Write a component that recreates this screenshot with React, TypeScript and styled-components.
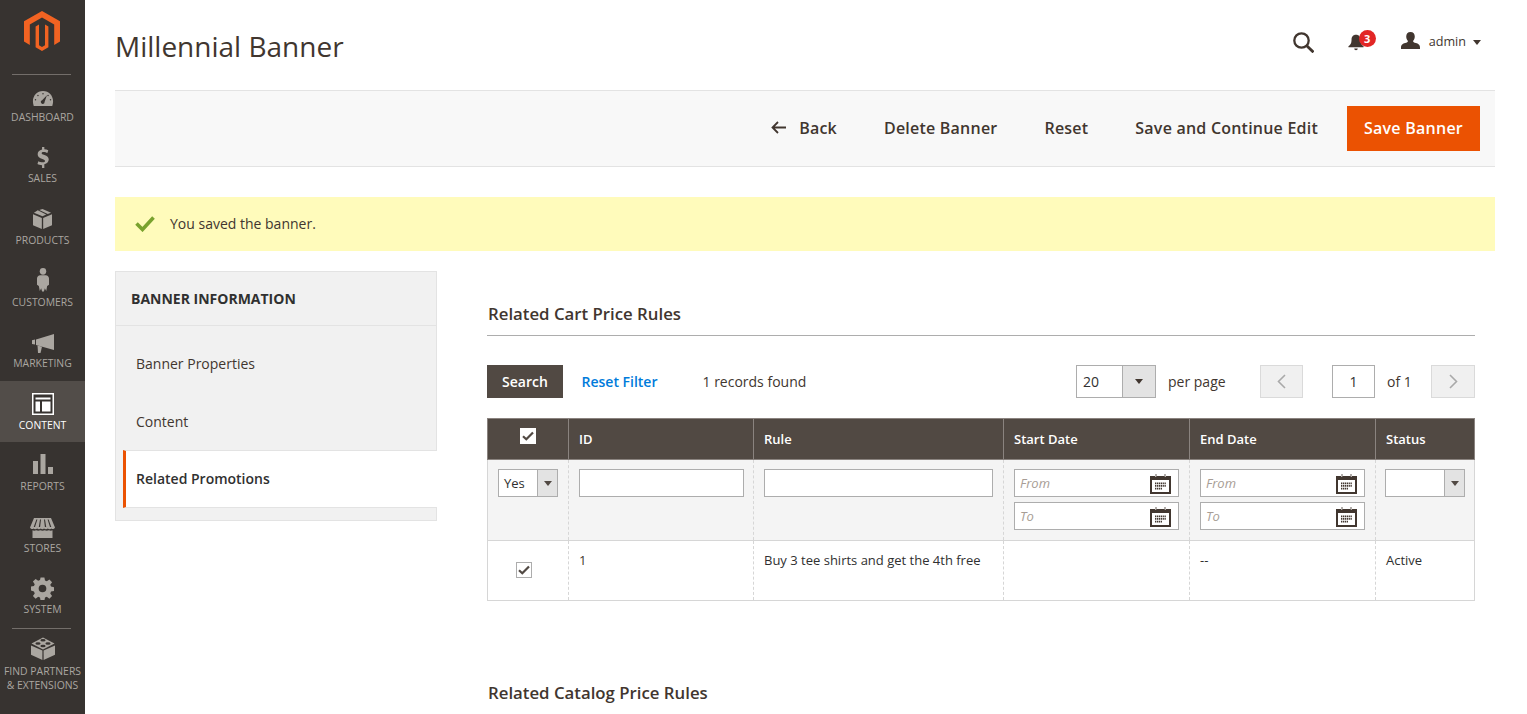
import React from 'react';
import styled, { createGlobalStyle } from 'styled-components';

const Global = createGlobalStyle`
  html, body { margin: 0; padding: 0; height: 100%; overflow: hidden; background: #fff; }
  body { font-family: "Open Sans", "Liberation Sans", sans-serif; color: #41362f; font-size: 14px; }
  * { box-sizing: border-box; }
`;

const Page = styled.div`
  display: flex;
  width: 1527px;
  height: 714px;
  overflow: hidden;
`;

const Sidebar = styled.aside`
  width: 85px;
  flex: none;
  height: 714px;
  background: #373330;
  overflow: hidden;
`;

const LogoBox = styled.div`
  height: 73px;
  display: flex;
  justify-content: center;
  padding-top: 11px;
  padding-right: 1px;
`;

const NavItem = styled.div<{ $active?: boolean; $rule?: boolean }>`
  position: relative;
  height: 61.55px;
  padding-top: 7px;
  display: flex;
  flex-direction: column;
  align-items: center;
  background: ${p => (p.$active ? '#524d49' : 'transparent')};
  color: ${p => (p.$active ? '#fff' : '#aaa6a0')};
  ${p => p.$rule && `
    &::before {
      content: '';
      position: absolute;
      left: 12px;
      right: 14px;
      top: 1px;
      height: 1px;
      background: #736e6a;
    }
  `}
`;

const NavIcon = styled.div<{ $dy?: number }>`
  height: 30px;
  display: flex;
  align-items: center;
  justify-content: center;
  flex: none;
  transform: translateY(${p => p.$dy || 0}px);
`;

const NavLabel = styled.div`
  font-size: 10.4px;
  line-height: 14px;
  margin-top: -.1px;
  text-transform: uppercase;
  text-align: center;
  white-space: nowrap;
`;

const Main = styled.main`
  flex: 1;
  min-width: 0;
  padding: 0 32px 0 30px;
`;

const Header = styled.header`
  height: 90px;
  display: flex;
  align-items: center;
  justify-content: space-between;
  padding-top: 2px;
`;

const Title = styled.h1`
  margin: 0;
  font-size: 28px;
  font-weight: 400;
  color: #41362f;
  line-height: 36px;
`;

const HeaderTools = styled.div`
  display: flex;
  align-items: center;
  padding-right: 14px;
  margin-bottom: 8px;
  height: 24px;
`;

const BellWrap = styled.div`
  position: relative;
  width: 16px;
  height: 17px;
  margin-left: 34px;
  margin-top: 1px;
`;

const BellSvg = styled.svg`
  display: block;
`;

const Badge = styled.span`
  position: absolute;
  left: 11px;
  top: -4px;
  width: 17px;
  height: 17px;
  border-radius: 50%;
  background: #e22626;
  color: #fff;
  font-size: 11px;
  font-weight: 700;
  line-height: 17px;
  text-align: center;
`;

const UserSvg = styled.svg`
  margin-left: 37px;
  margin-bottom: 3px;
`;

const UserName = styled.span`
  font-size: 12.6px;
  color: #41362f;
  margin-left: 9px;
  margin-bottom: 2px;
`;

const Caret = styled.span<{ $color?: string }>`
  display: inline-block;
  width: 0;
  height: 0;
  border-left: 4px solid transparent;
  border-right: 4px solid transparent;
  border-top: 5px solid ${p => p.$color || '#41362f'};
`;

const UserCaret = styled(Caret)`
  margin-left: 7px;
`;

const ActionBar = styled.div`
  height: 77px;
  background: #f8f8f8;
  border-top: 1px solid #e3e3e3;
  border-bottom: 1px solid #e3e3e3;
  display: flex;
  align-items: center;
  justify-content: flex-end;
  padding-right: 15px;
`;

const ActionLink = styled.div`
  font-size: 16px;
  font-weight: 600;
  letter-spacing: .22px;
  color: #41362f;
  margin-right: 47px;
  padding-bottom: 2px;
  display: flex;
  align-items: center;
  white-space: nowrap;
`;

const LastLink = styled(ActionLink)`
  margin-right: 29px;
`;

const BackArrow = styled.svg`
  margin-right: 13px;
`;

const Primary = styled.div`
  width: 133px;
  height: 45px;
  background: #eb5202;
  color: #fff;
  font-size: 16px;
  font-weight: 600;
  letter-spacing: .25px;
  padding-bottom: 2px;
  display: flex;
  align-items: center;
  justify-content: center;
`;

const Message = styled.div`
  margin-top: 30px;
  height: 54px;
  background: #fffbbb;
  display: flex;
  align-items: center;
  padding-left: 20px;
  padding-bottom: 1px;
  font-size: 14px;
  color: #41362f;
`;

const CheckMark = styled.svg`
  margin-right: 15px;
`;

const Columns = styled.div`
  display: flex;
  margin-top: 20px;
`;

const Tabs = styled.nav`
  width: 322px;
  height: 250px;
  flex: none;
  background: #f1f1f1;
  border: 1px solid #e3e3e3;
`;

const TabsTitle = styled.div`
  height: 54px;
  border-bottom: 1px solid #e3e3e3;
  padding-left: 15px;
  display: flex;
  align-items: center;
  font-size: 14px;
  font-weight: 700;
  color: #303030;
  text-transform: uppercase;
`;

const TabList = styled.div`
  padding-top: 9px;
`;

const TabItem = styled.div`
  height: 57.5px;
  padding-left: 20px;
  display: flex;
  align-items: center;
  font-size: 14px;
  color: #41362f;
`;

const ActiveTab = styled.div`
  height: 58px;
  margin-left: 7px;
  margin-right: -1px;
  background: #fff;
  border-left: 3px solid #eb5202;
  border-top: 1px solid #e3e3e3;
  border-bottom: 1px solid #e3e3e3;
  padding-left: 10px;
  padding-bottom: 2px;
  display: flex;
  align-items: center;
  font-size: 14px;
  font-weight: 600;
  color: #303030;
`;

const Content = styled.section`
  flex: 1;
  min-width: 0;
  margin-left: 50px;
  margin-right: 20px;
  padding-top: 28px;
`;

const SectionTitle = styled.h2`
  margin: 0;
  height: 37px;
  padding-left: 1px;
  border-bottom: 1px solid #adadad;
  font-size: 16.8px;
  font-weight: 600;
  line-height: 30px;
  color: #41362f;
`;

const GridBar = styled.div`
  margin-top: 29px;
  height: 33px;
  display: flex;
  align-items: center;
`;

const SearchButton = styled.div`
  width: 76px;
  height: 33px;
  background: #514943;
  color: #fff;
  font-size: 14px;
  font-weight: 600;
  display: flex;
  align-items: center;
  justify-content: center;
`;

const ResetFilter = styled.span`
  margin-left: 18.5px;
  font-size: 14px;
  font-weight: 600;
  color: #007bdb;
`;

const Records = styled.span`
  margin-left: 45px;
  font-size: 14px;
  color: #41362f;
`;

const Pager = styled.div`
  margin-left: auto;
  display: flex;
  align-items: center;
`;

const SelectBox = styled.div<{ $w: number; $h: number; $arrow: number; $fs: number; $shift?: number }>`
  width: ${p => p.$w}px;
  height: ${p => p.$h}px;
  margin-left: ${p => p.$shift || 0}px;
  border: 1px solid #adadad;
  background: #fff;
  display: flex;
  font-size: ${p => p.$fs}px;
  color: #303030;
  flex: none;
  & > span:first-child {
    flex: 1;
    display: flex;
    align-items: center;
    padding-left: ${p => (p.$fs < 14 ? 5 : 6)}px;
  }
  & > span:last-child {
    width: ${p => p.$arrow}px;
    background: #e3e3e3;
    border-left: 1px solid #adadad;
    display: flex;
    align-items: center;
    justify-content: center;
  }
`;

const PerPage = styled.span`
  margin-left: 12px;
  font-size: 14px;
  width: 92px;
`;

const PageBtn = styled.div<{ $w: number }>`
  width: ${p => p.$w}px;
  height: 33px;
  background: #f0f0f0;
  border: 1px solid #dadada;
  display: flex;
  align-items: center;
  justify-content: center;
  flex: none;
`;

const PageInput = styled.div`
  margin-left: 29px;
  width: 43px;
  height: 33px;
  border: 1px solid #adadad;
  display: flex;
  align-items: center;
  justify-content: center;
  font-size: 14px;
  color: #303030;
`;

const OfPages = styled.span`
  margin-left: 12px;
  width: 44px;
  font-size: 14px;
`;

const Table = styled.table`
  margin-top: 20px;
  width: 987px;
  table-layout: fixed;
  border-collapse: collapse;
  border-spacing: 0;
  font-size: 13px;
`;

const Th = styled.th`
  height: 41px;
  background: #514943;
  color: #fff;
  border: 1px solid #8a837f;
  font-size: 13px;
  font-weight: 600;
  text-align: left;
  padding: 0 10px;
  vertical-align: middle;
`;

const CheckTh = styled(Th)`
  padding: 0 0 4px 0;
  text-align: center;
`;

const FilterTd = styled.td`
  height: 81px;
  background: #f4f4f4;
  border-left: 1px dashed #d6d6d6;
  border-right: 1px dashed #d6d6d6;
  border-bottom: 1px solid #d6d6d6;
  padding: 9px 10px 0;
  vertical-align: top;
  &:first-child { border-left: 1px solid #d6d6d6; }
  &:last-child { border-right: 1px solid #d6d6d6; }
`;

const Td = styled.td`
  height: 60px;
  border-left: 1px dashed #d6d6d6;
  border-right: 1px dashed #d6d6d6;
  border-bottom: 1px solid #d6d6d6;
  padding: 10px 10px 0;
  vertical-align: top;
  color: #303030;
  font-size: 13px;
  line-height: 18px;
  &:first-child { border-left: 1px solid #d6d6d6; }
  &:last-child { border-right: 1px solid #d6d6d6; }
`;

const IdLink = styled.span`
  color: #41362f;
`;

const CheckTd = styled(Td)`
  padding: 21px 8px 0 0;
  text-align: center;
`;

const Box = styled.span<{ $border?: boolean }>`
  display: inline-flex;
  width: 16px;
  height: 16px;
  background: #fff;
  border: 1px solid ${p => (p.$border ? '#adadad' : '#fff')};
  align-items: center;
  justify-content: center;
  vertical-align: top;
`;

const TextInput = styled.div<{ $extra?: number }>`
  height: 28px;
  width: calc(100% + ${p => p.$extra || 0}px);
  background: #fff;
  border: 1px solid #adadad;
`;

const DateInput = styled.div`
  height: 28px;
  width: 100%;
  background: #fff;
  border: 1px solid #adadad;
  display: flex;
  align-items: center;
  justify-content: space-between;
  padding: 0 7px 0 5px;
  font-size: 13px;
  font-style: italic;
  color: #a79d95;
  & + & { margin-top: 5px; }
`;

const NextTitle = styled(SectionTitle)`
  margin-top: 77px;
  border: none;
`;

const Logo = () => (
  <svg width="36" height="40" viewBox="0 0 36 40">
    <path fill="#f26322" d="M18 0 36 10.300V30.600L30.200 34V13.600L18 6.600 5.800 13.600V34L0 30.600V10.300Z" />
    <path fill="#f26322" d="M11.600 15.600 15 13.600V34.300L18 36 21 34.300V13.600L24.400 15.600V36.300L18 40 11.600 36.300Z" />
  </svg>
);

const IconDashboard = () => (
  <svg width="22" height="17" viewBox="0 0 24 18" preserveAspectRatio="none" fill="currentColor">
    <path fillRule="evenodd" d="M12 1C5.500 1 1 6 1 12c0 1.700.3 3.300.9 5h20.200c.6-1.700.9-3.300.9-5C23 6 18.500 1 12 1ZM12 3.200a.8.8 0 1 1 0 1.600.8.800 0 0 1 0-1.600ZM6.500 5a.8.8 0 1 1 0 1.600.8.800 0 0 1 0-1.600ZM17.500 5a.8.8 0 1 1 0 1.600.8.800 0 0 1 0-1.600ZM3.800 9.500a.8.8 0 1 1 0 1.600.8.800 0 0 1 0-1.600ZM20.200 9.500a.8.8 0 1 1 0 1.600.8.800 0 0 1 0-1.600Z" />
    <path fill="#373330" d="M16.300 5.500 13.700 12.600a2 2 0 0 1-3.500 1.500 2.100 2.100 0 0 1 .8-3.200Z" />
  </svg>
);

const IconDollar = () => (
  <svg width="14" height="21" viewBox="0 0 14 22" fill="currentColor">
    <path d="M6 0h2.400v2.300c1.600.1 3 .5 4.100 1.100l-.9 3c-1.100-.6-2.500-1.100-4-1.100-1.300 0-2 .5-2 1.200 0 .8.800 1.200 2.900 1.900 2.900 1 4.500 2.300 4.500 4.800 0 2.400-1.700 4.300-4.600 4.800V22H6v-2.800c-1.900-.1-3.600-.6-4.800-1.300l.9-3.100c1.200.7 3 1.300 4.700 1.300 1.400 0 2.300-.6 2.300-1.500 0-.9-.8-1.400-2.800-2.100C3.400 11.600 1.400 10.300 1.400 7.600c0-2.400 1.700-4.300 4.600-4.900Z" />
  </svg>
);

const IconBox = () => (
  <svg width="19" height="20" viewBox="0 0 20 21" fill="currentColor">
    <path d="M0 5.500 9.300 9.400V21L0 17Z" />
    <path d="M20 5.500 10.700 9.400V21L20 17Z" />
    <path d="M6.600 .9 10 0 19 3.800 15.500 5.200ZM5 1.400 13.900 5.800 10 7.700 1 3.800Z" />
  </svg>
);

const IconPerson = () => (
  <svg width="12" height="24" viewBox="0 0 13 25" preserveAspectRatio="none" fill="currentColor">
    <circle cx="6.500" cy="3.500" r="3.500" />
    <path d="M3.500 7.500h6c1.900 0 3.500 1.400 3.500 3.500v6.500l-2 1.200-1 5.300-1.500-3-1 3.500h-2l-1-3.500-1.500 3-1-5.300L0 17.500V11c0-2.100 1.600-3.500 3.500-3.500Z" />
  </svg>
);

const IconMegaphone = () => (
  <svg width="22" height="19" viewBox="0 0 22 19" fill="currentColor">
    <path d="M0 6.200 3 5.600V10.400L0 10Z" />
    <path d="M4 5.400 22 0V16L4 11Z" />
    <path d="M5.500 11.500 10 12.800 8.500 19H6Z" />
  </svg>
);

const IconContent = () => (
  <svg width="22" height="22" viewBox="0 0 22 22">
    <path fill="#fff" d="M0 0h22v22H0Z" />
    <path fill="#373330" d="M1.500 1.500h19v19h-19ZM3.500 4.500v2h15v-2ZM3.500 8.500v10h4.500v-10ZM10 8.500v10h8.500v-10Z" fillRule="evenodd" />
  </svg>
);

const IconBars = () => (
  <svg width="20" height="20" viewBox="0 0 20 20" fill="currentColor">
    <path d="M0 7h5v13H0ZM7.500 0h5v20h-5ZM15 13h5v7h-5Z" />
  </svg>
);

const IconStore = () => (
  <svg width="25" height="20" viewBox="0 0 25 20" fill="currentColor">
    <path fillRule="evenodd" d="M4 0H21L25 9.500C24.500 11 22.500 11.500 21.500 10.500 20.800 11.500 18.800 11.600 17.800 10.500 17 11.500 15 11.600 14 10.500 13.300 11.500 11.500 11.500 10.800 10.500 10 11.500 8 11.500 7.200 10.500 6 11.500 4.500 11.500 3.500 10.500 2.500 11.500.5 11 0 9.500ZM6.400 1.500 3.700 9h1.300l2.400-7.500ZM10 1.500 8.800 9h1.300l.9-7.500ZM14 1.500 14.900 9h1.300l-1.200-7.500ZM17.600 1.500 20 9h1.300l-2.700-7.500Z" />
    <path d="M2.500 12.300c1.200.5 2.500.4 3.700-.1 1.200.6 2.800.6 4.100 0 1.400.6 3 .6 4.400 0 1.300.6 2.900.6 4.100 0 1.200.5 2.500.6 3.700.1V20h-20Z" />
  </svg>
);

const IconGear = () => (
  <svg width="23" height="23" viewBox="-.5 0 24 23" fill="currentColor">
    <path fillRule="evenodd" d="M9.500 0h4l.6 3.200 1.900.8 2.700-1.900 2.800 2.800-1.900 2.700.8 1.900 3.100.6v4l-3.100.6-.8 1.900 1.900 2.700-2.800 2.800-2.700-1.900-1.900.8-.6 3.200h-4l-.6-3.200-1.900-.8-2.700 1.900-2.800-2.800 1.900-2.700-.8-1.900L-.5 13.500v-4l3.100-.6.8-1.900-1.900-2.700 2.800-2.800 2.700 1.900 1.900-.8ZM11.500 7.500a4 4 0 1 0 0 8 4 4 0 0 0 0-8Z" />
  </svg>
);

const IconLego = () => (
  <svg width="24" height="23" viewBox="0 0 24 23" fill="currentColor">
    <path d="M0 8.500 11.400 13.500V23L0 17.800Z" />
    <path d="M24 8.500 12.600 13.500V23L24 17.800Z" />
    <path d="M12 0.500 23.500 6.500 12 12.500.5 6.500ZM12 1.900a2.600 1.300 0 1 0 0 2.600 2.600 1.300 0 0 0 0-2.600Z" fillRule="evenodd" />
    <ellipse cx="7" cy="6.500" rx="2.600" ry="1.300" fill="#373330" />
    <ellipse cx="17" cy="6.500" rx="2.600" ry="1.300" fill="#373330" />
    <ellipse cx="12" cy="9" rx="2.600" ry="1.300" fill="#373330" />
  </svg>
);

const Search = () => (
  <svg width="21" height="21" viewBox="0 0 21 21" fill="none" stroke="#41362f">
    <circle cx="8.500" cy="8.500" r="7.200" strokeWidth="2.300" />
    <path d="M13.500 13.500 20.500 20.300" strokeWidth="2.800" />
  </svg>
);

const Bell = () => (
  <BellSvg width="16" height="17" viewBox="0 0 18 20" preserveAspectRatio="none" fill="#41362f">
    <path d="M9 1c3.500 0 5 2.700 5 6 0 4 1.500 6 3.500 7.500v1H.5v-1C2.500 13 4 11 4 7c0-3.300 1.500-6 5-6Z" />
    <path d="M7 17h4a2 2 0 0 1-4 0Z" />
  </BellSvg>
);

const User = () => (
  <UserSvg width="19" height="17" viewBox="0 0 20 19" preserveAspectRatio="none" fill="#41362f">
    <path d="M10 0c3 0 4.500 2.200 4.500 5 0 2-.7 3.700-1.800 5 .1 1.200 1 1.700 3 2.300 2.300.7 4.300 1.700 4.300 5.200V19H0v-1.500c0-3.500 2-4.500 4.300-5.200 2-.6 2.900-1.100 3-2.300C6.200 8.700 5.500 7 5.500 5 5.500 2.200 7 0 10 0Z" />
  </UserSvg>
);

const calendarDots = [0, 1, 2].flatMap(r =>
  [0, 1, 2, 3, 4, 5].filter(c => r < 2 || c < 4).map(c => `M${5 + c * 1.900} ${9.500 + r * 2.600}h1.300v1.700h-1.300Z`)
).join('');

const Calendar = () => (
  <svg width="21" height="21" viewBox="0 0 21 21">
    <path fill="#41362f" d="M0 3h5v-2h1.500v2h8v-2H16v2h5v18H0Z" />
    <path fill="#fff" d="M2 7h17v12H2Z" />
    <path fill="#fff" d="M5.400 1h.8v3h-.8ZM14.800 1h.8v3h-.8Z" />
    <path fill="#41362f" d={calendarDots} />
  </svg>
);

const Tick = () => (
  <svg width="12" height="10" viewBox="0 0 12 10">
    <path d="M1 5.200 4.300 8.300 11 1.500" fill="none" stroke="#514943" strokeWidth="2.200" />
  </svg>
);

const navItems: { label: React.ReactNode; icon: React.ReactNode; active?: boolean; rule?: boolean; dy?: number }[] = [
  { label: 'Dashboard', icon: <IconDashboard />, rule: true, dy: 3 },
  { label: 'Sales', icon: <IconDollar />, dy: 1 },
  { label: 'Products', icon: <IconBox />, dy: 1 },
  { label: 'Customers', icon: <IconPerson /> },
  { label: 'Marketing', icon: <IconMegaphone />, dy: 2 },
  { label: 'Content', icon: <IconContent />, active: true, dy: 1 },
  { label: 'Reports', icon: <IconBars /> },
  { label: 'Stores', icon: <IconStore />, dy: 2 },
  { label: 'System', icon: <IconGear />, dy: 1 },
  { label: <>Find Partners<br />&amp; Extensions</>, icon: <IconLego />, rule: true },
];

const colWidths = [81, 185, 250, 186, 186, 99];

export default function App() {
  return (
    <Page>
      <Global />
      <Sidebar>
        <LogoBox><Logo /></LogoBox>
        {navItems.map((n, i) => (
          <NavItem key={i} $active={n.active} $rule={n.rule}>
            <NavIcon $dy={n.dy}>{n.icon}</NavIcon>
            <NavLabel>{n.label}</NavLabel>
          </NavItem>
        ))}
      </Sidebar>
      <Main>
        <Header>
          <Title>Millennial Banner</Title>
          <HeaderTools>
            <Search />
            <BellWrap><Bell /><Badge>3</Badge></BellWrap>
            <User />
            <UserName>admin</UserName>
            <UserCaret />
          </HeaderTools>
        </Header>
        <ActionBar>
          <ActionLink>
            <BackArrow width="15" height="13" viewBox="0 0 15 13" fill="none" stroke="#41362f" strokeWidth="1.800">
              <path d="M15 6.500H2M7 1 1.500 6.500 7 12" />
            </BackArrow>
            Back
          </ActionLink>
          <ActionLink>Delete Banner</ActionLink>
          <ActionLink>Reset</ActionLink>
          <LastLink>Save and Continue Edit</LastLink>
          <Primary>Save Banner</Primary>
        </ActionBar>
        <Message>
          <CheckMark width="20" height="16" viewBox="0 0 20 16" fill="none" stroke="#79a22e" strokeWidth="3.600">
            <path d="M1.500 7.500 7.500 13.500 18.500 1.500" />
          </CheckMark>
          You saved the banner.
        </Message>
        <Columns>
          <Tabs>
            <TabsTitle>Banner Information</TabsTitle>
            <TabList>
              <TabItem>Banner Properties</TabItem>
              <TabItem>Content</TabItem>
              <ActiveTab>Related Promotions</ActiveTab>
            </TabList>
          </Tabs>
          <Content>
            <SectionTitle>Related Cart Price Rules</SectionTitle>
            <GridBar>
              <SearchButton>Search</SearchButton>
              <ResetFilter>Reset Filter</ResetFilter>
              <Records>1 records found</Records>
              <Pager>
                <SelectBox $w={80} $h={33} $arrow={33} $fs={14}>
                  <span>20</span>
                  <span><Caret /></span>
                </SelectBox>
                <PerPage>per page</PerPage>
                <PageBtn $w={43}>
                  <svg width="9" height="15" viewBox="0 0 9 15" fill="none" stroke="#a9a9a9" strokeWidth="1.600"><path d="M8 1 1.500 7.500 8 14" /></svg>
                </PageBtn>
                <PageInput>1</PageInput>
                <OfPages>of 1</OfPages>
                <PageBtn $w={44}>
                  <svg width="9" height="15" viewBox="0 0 9 15" fill="none" stroke="#a9a9a9" strokeWidth="1.600"><path d="M1 1 7.500 7.500 1 14" /></svg>
                </PageBtn>
              </Pager>
            </GridBar>
            <Table>
              <colgroup>
                {colWidths.map((w, i) => <col key={i} style={{ width: w }} />)}
              </colgroup>
              <thead>
                <tr>
                  <CheckTh><Box><Tick /></Box></CheckTh>
                  <Th>ID</Th>
                  <Th>Rule</Th>
                  <Th>Start Date</Th>
                  <Th>End Date</Th>
                  <Th>Status</Th>
                </tr>
              </thead>
              <tbody>
                <tr>
                  <FilterTd>
                    <SelectBox $w={60} $h={28} $arrow={20} $fs={13}>
                      <span>Yes</span>
                      <span><Caret $color="#514943" /></span>
                    </SelectBox>
                  </FilterTd>
                  <FilterTd><TextInput $extra={1} /></FilterTd>
                  <FilterTd><TextInput /></FilterTd>
                  <FilterTd>
                    <DateInput>From<Calendar /></DateInput>
                    <DateInput>To<Calendar /></DateInput>
                  </FilterTd>
                  <FilterTd>
                    <DateInput>From<Calendar /></DateInput>
                    <DateInput>To<Calendar /></DateInput>
                  </FilterTd>
                  <FilterTd>
                    <SelectBox $w={80} $h={28} $arrow={20} $fs={13} $shift={-1}>
                      <span />
                      <span><Caret $color="#514943" /></span>
                    </SelectBox>
                  </FilterTd>
                </tr>
                <tr>
                  <CheckTd><Box $border><Tick /></Box></CheckTd>
                  <Td><IdLink>1</IdLink></Td>
                  <Td>Buy 3 tee shirts and get the 4th free</Td>
                  <Td />
                  <Td>--</Td>
                  <Td>Active</Td>
                </tr>
              </tbody>
            </Table>
            <NextTitle>Related Catalog Price Rules</NextTitle>
          </Content>
        </Columns>
      </Main>
    </Page>
  );
}
